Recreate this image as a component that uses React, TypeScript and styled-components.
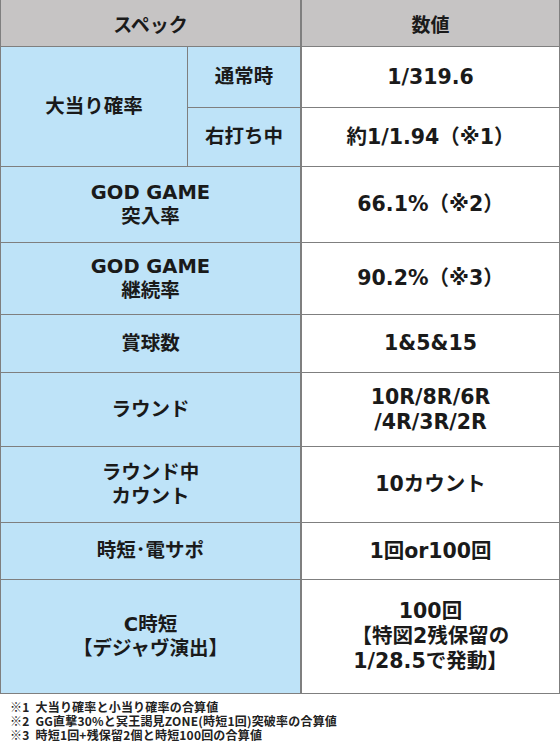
import styled, { createGlobalStyle } from "styled-components";

const GlobalStyle = createGlobalStyle`
  body {
    margin: 0;
    background: #ffffff;
    color: #1a1a1a;
    font-family: "DejaVu Sans", "Noto Sans CJK JP", sans-serif;
    -webkit-font-smoothing: antialiased;
  }
`;

const Page = styled.div`
  width: 560px;
  height: 748px;
  background: #ffffff;
`;

const Table = styled.div`
  width: 560px;
  box-sizing: border-box;
  display: grid;
  grid-template-columns: 186px 112px 1fr;
  grid-template-rows: 46px 60px 58px 75px 71px 57px 73px 75px 56px 113px;
  gap: 1px;
  padding: 0 1px 1px 1px;
  background: #7f7f7f;
`;

const Cell = styled.div<{ $span?: number; $rows?: number }>`
  display: flex;
  align-items: center;
  justify-content: center;
  text-align: center;
  font-weight: 700;
  grid-column: span ${(p) => p.$span || 1};
  grid-row: span ${(p) => p.$rows || 1};
`;

const HeadCell = styled(Cell)`
  background: #c6c4c4;
  font-size: 19px;
  font-family: "Noto Sans CJK JP", sans-serif;
`;

const HeadValue = styled(HeadCell)`
  border-left: 1px solid #7f7f7f;
`;

const LabelCell = styled(Cell)`
  background: #bee3f8;
  font-size: 19.5px;
  line-height: 24px;
`;

const ValueCell = styled(Cell)`
  background: #ffffff;
  border-left: 1px solid #7f7f7f;
  font-size: 20.5px;
  line-height: 25px;
`;

const Notes = styled.div`
  padding: 6px 0 0 10px;
  font-family: "Noto Sans CJK JP", sans-serif;
  font-weight: 700;
  font-size: 12px;
  line-height: 14px;
  letter-spacing: 0.2px;
  color: #222222;
`;

const Note = styled.div`
  white-space: nowrap;
`;

const Mark = styled.span`
  margin-right: 6px;
`;

type Row = { label: string[]; value: string[] };

const rows: Row[] = [
  { label: ["GOD GAME", "突入率"], value: ["66.1%（※2）"] },
  { label: ["GOD GAME", "継続率"], value: ["90.2%（※3）"] },
  { label: ["賞球数"], value: ["1&5&15"] },
  { label: ["ラウンド"], value: ["10R/8R/6R", "/4R/3R/2R"] },
  { label: ["ラウンド中", "カウント"], value: ["10カウント"] },
  { label: ["時短･電サポ"], value: ["1回or100回"] },
  { label: ["C時短", "【デジャヴ演出】"], value: ["100回", "【特図2残保留の", "1/28.5で発動】"] },
];

const notes = [
  ["※1", "大当り確率と小当り確率の合算値"],
  ["※2", "GG直撃30%と冥王謁見ZONE(時短1回)突破率の合算値"],
  ["※3", "時短1回+残保留2個と時短100回の合算値"],
];

function Lines({ items }: { items: string[] }) {
  return (
    <div>
      {items.map((t) => (
        <div key={t}>{t}</div>
      ))}
    </div>
  );
}

export default function App() {
  return (
    <Page>
      <GlobalStyle />
      <Table>
        <HeadCell $span={2}>スペック</HeadCell>
        <HeadValue>数値</HeadValue>

        <LabelCell $rows={2}>大当り確率</LabelCell>
        <LabelCell>通常時</LabelCell>
        <ValueCell>1/319.6</ValueCell>
        <LabelCell>右打ち中</LabelCell>
        <ValueCell>約1/1.94（※1）</ValueCell>

        {rows.map((r, i) => [
          <LabelCell key={"l" + i} $span={2}>
            <Lines items={r.label} />
          </LabelCell>,
          <ValueCell key={"v" + i}>
            <Lines items={r.value} />
          </ValueCell>,
        ])}
      </Table>
      <Notes>
        {notes.map(([m, t]) => (
          <Note key={m}>
            <Mark>{m}</Mark>
            {t}
          </Note>
        ))}
      </Notes>
    </Page>
  );
}
